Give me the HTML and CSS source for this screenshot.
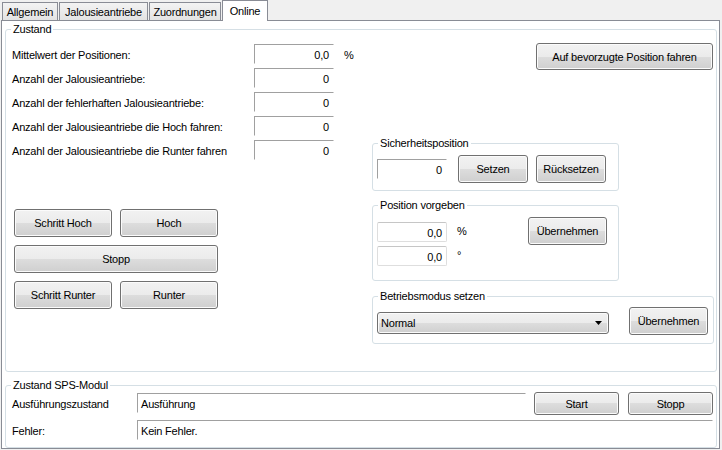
FILE: index.html
```html
<!DOCTYPE html>
<html lang="de">
<head>
  <meta charset="UTF-8">
  <title>Online</title>
  <link rel="stylesheet" href="styles.css">
</head>
<body>
  <div class="tabs">
    <div class="tab t1">Allgemein</div>
    <div class="tab t2">Jalousieantriebe</div>
    <div class="tab t3">Zuordnungen</div>
    <div class="tab active">Online</div>
  </div>

  <div class="page">
    <fieldset class="group zustand">
      <legend>Zustand</legend>
      <div class="zbody">
        <div class="zleft">
          <div class="row"><span class="lbl">Mittelwert der Positionen:</span><span class="ro num">0,0</span><span class="unit">%</span></div>
          <div class="row"><span class="lbl">Anzahl der Jalousieantriebe:</span><span class="ro num">0</span></div>
          <div class="row"><span class="lbl">Anzahl der fehlerhaften Jalousieantriebe:</span><span class="ro num">0</span></div>
          <div class="row"><span class="lbl">Anzahl der Jalousieantriebe die Hoch fahren:</span><span class="ro num">0</span></div>
          <div class="row"><span class="lbl">Anzahl der Jalousieantriebe die Runter fahren</span><span class="ro num">0</span></div>

          <div class="moves">
            <button class="btn">Schritt Hoch</button>
            <button class="btn">Hoch</button>
            <button class="btn wide">Stopp</button>
            <button class="btn">Schritt Runter</button>
            <button class="btn">Runter</button>
          </div>
        </div>

        <div class="zright">
          <button class="btn pref">Auf bevorzugte Position fahren</button>

          <fieldset class="group safe">
            <legend>Sicherheitsposition</legend>
            <div class="inner">
              <span class="ro num small">0</span>
              <button class="btn set">Setzen</button>
              <button class="btn reset">Rücksetzen</button>
            </div>
          </fieldset>

          <fieldset class="group pos">
            <legend>Position vorgeben</legend>
            <div class="inner">
              <div class="vals">
                <div class="vrow"><span class="edit">0,0</span><span class="vunit">%</span></div>
                <div class="vrow"><span class="edit">0,0</span><span class="vunit">°</span></div>
              </div>
              <button class="btn apply">Übernehmen</button>
            </div>
          </fieldset>

          <fieldset class="group mode">
            <legend>Betriebsmodus setzen</legend>
            <div class="inner">
              <div class="combo">
                <span>Normal</span>
                <svg width="7" height="4" viewBox="0 0 7 4"><polygon points="0,0 7,0 3.5,4" fill="#000"/></svg>
              </div>
              <button class="btn apply">Übernehmen</button>
            </div>
          </fieldset>
        </div>
      </div>
    </fieldset>

    <fieldset class="group sps">
      <legend>Zustand SPS-Modul</legend>
      <div class="inner">
        <div class="srow">
          <span class="slbl">Ausführungszustand</span>
          <span class="ro field state">Ausführung</span>
          <button class="btn sbtn start">Start</button>
          <button class="btn sbtn stop">Stopp</button>
        </div>
        <div class="srow err">
          <span class="slbl">Fehler:</span>
          <span class="ro field fault">Kein Fehler.</span>
        </div>
      </div>
    </fieldset>
  </div>
</body>
</html>
```

FILE: styles.css
```css
* {
  box-sizing: border-box;
}
body {
  margin: 0;
  width: 722px;
  height: 450px;
  overflow: hidden;
  background: #f0f0f0;
  font: 11px "Liberation Sans", Arial, sans-serif;
  letter-spacing: -0.2px;
  color: #000;
}

/* tab strip */
.tabs {
  display: flex;
  align-items: flex-end;
  height: 20px;
  padding-left: 2px;
}
.tab {
  height: 18px;
  padding-top: 1px;
  line-height: 16px;
  text-align: center;
  border: 1px solid #898c95;
  border-bottom: none;
  background: linear-gradient(#f3f3f3, #e3e3e3);
  margin-right: 1px;
}
.t1 { width: 56px; }
.t2 { width: 89px; }
.t3 { width: 72px; }
.tab.active {
  position: relative;
  z-index: 1;
  width: 46px;
  height: 21px;
  padding-top: 2px;
  margin-bottom: -1px;
  background: #fff;
}

.page {
  margin-left: 1px;
  width: 719px;
  height: 429px;
  border: 1px solid #898c95;
  background: #fff;
  padding: 2px 2px 0 3px;
}

/* group boxes */
.group {
  margin: 0;
  padding: 0;
  min-width: 0;
  border: 1px solid #d5dfe5;
  border-radius: 3px;
}
.group legend {
  margin-left: 5px;
  padding: 0 2px;
  line-height: 13px;
}

/* buttons and boxes */
.btn {
  font: inherit;
  letter-spacing: inherit;
  color: #000;
  padding: 0;
  border: 1px solid #707070;
  border-radius: 3px;
  background: linear-gradient(#f2f2f2, #ebebeb 50%, #dddddd 50%, #cfcfcf);
  box-shadow: inset 0 0 0 1px #fbfbfb;
  height: 28px;
}
.ro {
  display: block;
  height: 20px;
  line-height: 19px;
  padding-top: 1px;
  border: 1px solid #fff;
  border-top-color: #a0a0a0;
  border-left-color: #a0a0a0;
  white-space: nowrap;
}
.num {
  width: 80px;
  text-align: right;
  padding-right: 4px;
}

/* Zustand */
.zbody {
  display: flex;
  height: 335px;
}
.zleft {
  width: 366px;
  padding: 8px 0 0 6px;
}
.row {
  display: flex;
  align-items: center;
  height: 20px;
  margin-bottom: 4px;
}
.lbl {
  width: 242px;
  padding-top: 2px;
}
.unit {
  margin-left: 10px;
  padding-top: 2px;
}
.moves {
  display: grid;
  grid-template-columns: 98px 98px;
  gap: 8px;
  margin: 49px 0 0 2px;
}
.wide {
  grid-column: span 2;
}

.zright {
  width: 344px;
  display: flex;
  flex-direction: column;
  align-items: flex-start;
}
.pref {
  align-self: flex-end;
  width: 177px;
  height: 27px;
  margin: 7px 3px 0 0;
}

.safe {
  width: 247px;
  margin-top: 67px;
}
.safe .inner {
  display: flex;
  align-items: center;
  padding: 5px 0 7px 4px;
}
.small {
  width: 70px;
}
.set {
  width: 70px;
  margin-left: 11px;
}
.reset {
  width: 70px;
  margin-left: 8px;
}

.pos {
  width: 247px;
  margin-top: 8px;
}
.pos .inner {
  display: flex;
  align-items: flex-start;
  padding: 0 0 14px 4px;
}
.vals {
  padding-top: 10px;
}
.vrow {
  display: flex;
  height: 20px;
  margin-bottom: 4px;
}
.vrow:last-child {
  margin-bottom: 0;
}
.edit {
  width: 70px;
  height: 20px;
  line-height: 18px;
  padding: 1px 4px 0 0;
  text-align: right;
  border: 1px solid #dedede;
  border-top-color: #c6c6c6;
  border-radius: 2px;
}
.vunit {
  width: 81px;
  padding: 3px 0 0 10px;
}
.apply {
  width: 79px;
  margin-top: 5px;
}

.mode {
  width: 342px;
  margin-top: 9px;
}
.mode .inner {
  display: flex;
  align-items: flex-start;
  padding: 4px 0 8px 4px;
}
.mode .apply {
  margin: 0 0 0 20px;
}
.combo {
  display: flex;
  align-items: center;
  justify-content: space-between;
  width: 232px;
  height: 22px;
  margin-top: 5px;
  padding: 0 6px 0 3px;
  border: 1px solid #707070;
  border-radius: 3px;
  background: linear-gradient(#f2f2f2, #ebebeb 50%, #dddddd 50%, #cfcfcf);
  box-shadow: inset 0 0 0 1px #fbfbfb;
}

/* Zustand SPS-Modul */
.sps {
  margin-top: 7px;
}
.sps .inner {
  padding: 0 0 7px 6px;
}
.srow {
  display: flex;
  align-items: flex-start;
  height: 23px;
}
.srow.err {
  height: 20px;
  margin-top: 5px;
}
.slbl {
  width: 125px;
  line-height: 20px;
  margin-top: 2px;
}
.srow.err .slbl {
  margin-top: 1px;
}
.field {
  padding-left: 3px;
}
.state {
  width: 389px;
  margin-top: 1px;
}
.fault {
  width: 576px;
}
.sbtn {
  width: 85px;
  height: 23px;
}
.start {
  margin-left: 8px;
}
.stop {
  margin-left: 9px;
}
```
